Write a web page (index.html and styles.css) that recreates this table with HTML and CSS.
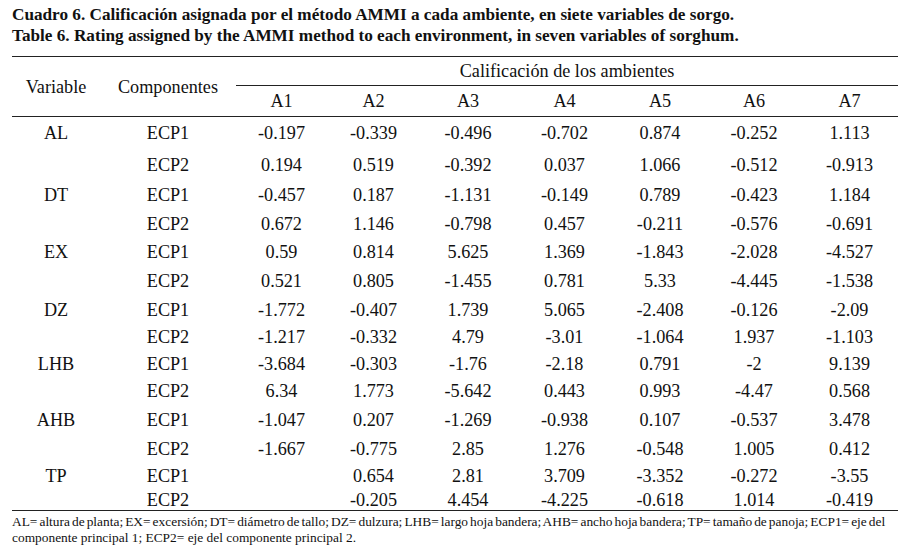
FILE: index.html
```html
<!DOCTYPE html>
<html lang="es">
<head>
<meta charset="utf-8">
<title>Cuadro 6</title>
<link rel="stylesheet" href="styles.css">
</head>
<body>
<div class="page">
  <div class="caption">
    <div>Cuadro 6. Calificación asignada por el método AMMI a cada ambiente, en siete variables de sorgo.</div>
    <div>Table 6. Rating assigned by the AMMI method to each environment, in seven variables of sorghum.</div>
  </div>
  <table class="data">
    <colgroup>
      <col class="c-var"><col class="c-comp"><col class="c-a1"><col class="c-a2"><col class="c-a3"><col class="c-a4"><col class="c-a5"><col class="c-a6"><col class="c-a7">
    </colgroup>
    <thead>
      <tr class="hr1">
        <th rowspan="2">Variable</th>
        <th rowspan="2">Componentes</th>
        <th colspan="7" class="group">Calificación de los ambientes</th>
      </tr>
      <tr class="hr2">
        <th>A1</th><th>A2</th><th>A3</th><th>A4</th><th>A5</th><th>A6</th><th>A7</th>
      </tr>
    </thead>
    <tbody>
      <tr class="h32"><td>AL</td><td>ECP1</td><td>-0.197</td><td>-0.339</td><td>-0.496</td><td>-0.702</td><td>0.874</td><td>-0.252</td><td>1.113</td></tr>
      <tr class="h31"><td></td><td>ECP2</td><td>0.194</td><td>0.519</td><td>-0.392</td><td>0.037</td><td>1.066</td><td>-0.512</td><td>-0.913</td></tr>
      <tr class="h30"><td>DT</td><td>ECP1</td><td>-0.457</td><td>0.187</td><td>-1.131</td><td>-0.149</td><td>0.789</td><td>-0.423</td><td>1.184</td></tr>
      <tr class="h28"><td></td><td>ECP2</td><td>0.672</td><td>1.146</td><td>-0.798</td><td>0.457</td><td>-0.211</td><td>-0.576</td><td>-0.691</td></tr>
      <tr class="h28"><td>EX</td><td>ECP1</td><td>0.59</td><td>0.814</td><td>5.625</td><td>1.369</td><td>-1.843</td><td>-2.028</td><td>-4.527</td></tr>
      <tr class="h30"><td></td><td>ECP2</td><td>0.521</td><td>0.805</td><td>-1.455</td><td>0.781</td><td>5.33</td><td>-4.445</td><td>-1.538</td></tr>
      <tr class="h27"><td>DZ</td><td>ECP1</td><td>-1.772</td><td>-0.407</td><td>1.739</td><td>5.065</td><td>-2.408</td><td>-0.126</td><td>-2.09</td></tr>
      <tr class="h27"><td></td><td>ECP2</td><td>-1.217</td><td>-0.332</td><td>4.79</td><td>-3.01</td><td>-1.064</td><td>1.937</td><td>-1.103</td></tr>
      <tr class="h27"><td>LHB</td><td>ECP1</td><td>-3.684</td><td>-0.303</td><td>-1.76</td><td>-2.18</td><td>0.791</td><td>-2</td><td>9.139</td></tr>
      <tr class="h28"><td></td><td>ECP2</td><td>6.34</td><td>1.773</td><td>-5.642</td><td>0.443</td><td>0.993</td><td>-4.47</td><td>0.568</td></tr>
      <tr class="h29"><td>AHB</td><td>ECP1</td><td>-1.047</td><td>0.207</td><td>-1.269</td><td>-0.938</td><td>0.107</td><td>-0.537</td><td>3.478</td></tr>
      <tr class="h29"><td></td><td>ECP2</td><td>-1.667</td><td>-0.775</td><td>2.85</td><td>1.276</td><td>-0.548</td><td>1.005</td><td>0.412</td></tr>
      <tr class="h26"><td>TP</td><td>ECP1</td><td></td><td>0.654</td><td>2.81</td><td>3.709</td><td>-3.352</td><td>-0.272</td><td>-3.55</td></tr>
      <tr class="h21"><td></td><td>ECP2</td><td></td><td>-0.205</td><td>4.454</td><td>-4.225</td><td>-0.618</td><td>1.014</td><td>-0.419</td></tr>
    </tbody>
  </table>
  <div class="note">
    <div class="note-line tight">AL= altura de planta; EX= excersión; DT= diámetro de tallo; DZ= dulzura; LHB= largo hoja bandera; AHB= ancho hoja bandera; TP= tamaño de panoja; ECP1= eje del</div>
    <div class="note-line">componente principal 1; ECP2= eje del componente principal 2.</div>
  </div>
</div>
</body>
</html>
```

FILE: styles.css
```css
html, body {
  margin: 0;
  padding: 0;
  background: #ffffff;
}

.page {
  padding: 4px 14px 0 12px;
  font-family: "Liberation Serif", Tinos, "Times New Roman", "DejaVu Serif", serif;
  color: #111;
}

.caption {
  font-weight: bold;
  font-size: 17.2px;
  line-height: 21px;
  height: 52px;
  white-space: nowrap;
}

.data {
  width: 886px;
  table-layout: fixed;
  border-collapse: collapse;
  border-top: 1.5px solid #222;
  border-bottom: 1.5px solid #222;
  font-family: inherit;
  font-size: 18.2px;
}

.c-var { width: 88px; }
.c-comp { width: 136px; }
.c-a1 { width: 91px; }
.c-a2 { width: 93px; }
.c-a3 { width: 96px; }
.c-a4 { width: 97px; }
.c-a5 { width: 94px; }
.c-a6 { width: 94px; }
.c-a7 { width: 97px; }

.data th,
.data td {
  padding: 0;
  text-align: center;
  vertical-align: middle;
  font-weight: normal;
  white-space: nowrap;
  line-height: 20px;
}

.hr1 th { height: 28px; }
.hr2 th { height: 30px; border-bottom: 1.5px solid #222; }
.hr1 th[rowspan] { border-bottom: 1.5px solid #222; }
.group { border-bottom: 1.5px solid #222; }

.h21 td { height: 21px; }
.h26 td { height: 26px; }
.h27 td { height: 27px; }
.h28 td { height: 28px; }
.h29 td { height: 29px; }
.h30 td { height: 30px; }
.h31 td { height: 31px; }
.h32 td { height: 32px; }

.note {
  margin-top: 3px;
  font-size: 13.4px;
  line-height: 16px;
}

.note-line {
  white-space: nowrap;
}

.tight {
  word-spacing: -1.3px;
}
```
